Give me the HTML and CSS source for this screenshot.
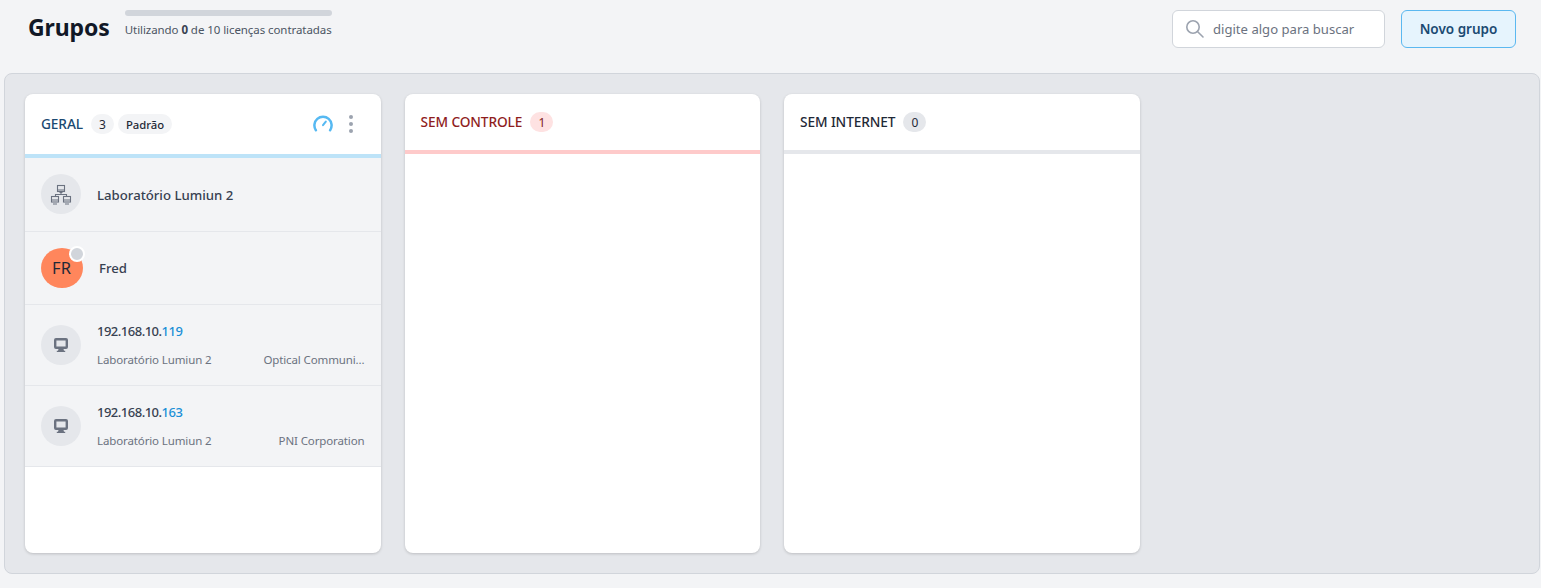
FILE: index.html
```html
<!DOCTYPE html>
<html lang="pt-BR">
<head>
<meta charset="utf-8">
<title>Grupos</title>
<link rel="stylesheet" href="styles.css">
</head>
<body>
<header class="topbar">
  <h1 class="title">Grupos</h1>
  <div class="license">
    <div class="license-track"></div>
    <p class="license-text">Utilizando <b>0</b> de 10 licenças contratadas</p>
  </div>
  <label class="search">
    <svg class="search-icon" viewBox="0 0 20 20" width="20" height="20" fill="none" stroke="currentColor" stroke-width="1.600" stroke-linecap="round"><circle cx="8" cy="8" r="6.200"/><path d="M12.700 12.700 18 18"/></svg>
    <span class="search-text">digite algo para buscar</span>
  </label>
  <button class="new-group">Novo grupo</button>
</header>
<main class="board">
  <section class="column">
    <div class="col-head col-head-tall head-blue">
      <span class="col-name name-blue">GERAL</span>
      <span class="count">3</span>
      <span class="tag">Padrão</span>
      <span class="head-tools">
        <svg class="gauge" viewBox="0 0 20 20" width="20" height="20" fill="none" stroke="currentColor" stroke-width="2.500" stroke-linecap="round"><path d="M2.900 16.200A8.600 8.600 0 1 1 17.100 16.200"/><path d="M10 11.200 12.800 7.600" stroke-width="2"/></svg>
        <span class="dots"><i></i><i></i><i></i></span>
      </span>
    </div>
    <ul class="rows">
      <li class="row row-simple">
        <span class="icon-disc">
          <svg class="net-icon" viewBox="0 0 24 24" width="24" height="24" fill="none" stroke="currentColor" stroke-width="1.100"><rect x="8.500" y="2.500" width="7" height="6"/><path d="M12 8.500v3M6.500 13.500v-2h11v2M10.500 9.500h3"/><rect x="2.500" y="13.500" width="7" height="5.500"/><rect x="14.500" y="13.500" width="7" height="5.500"/><path d="M2.500 17h7M14.500 17h7M4 21h4M16 21h4M8.500 7h7"/></svg>
        </span>
        <span class="row-name">Laboratório Lumiun 2</span>
      </li>
      <li class="row row-simple">
        <span class="avatar">FR<i class="status"></i></span>
        <span class="row-name">Fred</span>
      </li>
      <li class="row row-device">
        <span class="icon-disc">
          <svg viewBox="0 0 20 20" width="20" height="20" fill="currentColor"><path fill-rule="evenodd" d="M5 3h10a2 2 0 0 1 2 2v7a2 2 0 0 1-2 2H5a2 2 0 0 1-2-2V5a2 2 0 0 1 2-2Zm.400 2.400v6.200h9.200V5.400Z"/><path d="M7.500 14h5l.5 1.700h1.200V17H5.800v-1.300H7Z"/></svg>
        </span>
        <div class="device">
          <div class="ip">192.168.10.<span class="ip-end">119</span></div>
          <div class="meta"><span>Laboratório Lumiun 2</span><span class="vendor">Optical Communi...</span></div>
        </div>
      </li>
      <li class="row row-device">
        <span class="icon-disc">
          <svg viewBox="0 0 20 20" width="20" height="20" fill="currentColor"><path fill-rule="evenodd" d="M5 3h10a2 2 0 0 1 2 2v7a2 2 0 0 1-2 2H5a2 2 0 0 1-2-2V5a2 2 0 0 1 2-2Zm.400 2.400v6.200h9.200V5.400Z"/><path d="M7.500 14h5l.5 1.700h1.200V17H5.800v-1.300H7Z"/></svg>
        </span>
        <div class="device">
          <div class="ip">192.168.10.<span class="ip-end">163</span></div>
          <div class="meta"><span>Laboratório Lumiun 2</span><span class="vendor">PNI Corporation</span></div>
        </div>
      </li>
    </ul>
  </section>
  <section class="column">
    <div class="col-head head-red">
      <span class="col-name name-red">SEM CONTROLE</span>
      <span class="count count-red">1</span>
    </div>
  </section>
  <section class="column">
    <div class="col-head head-gray">
      <span class="col-name name-dark">SEM INTERNET</span>
      <span class="count count-gray">0</span>
    </div>
  </section>
</main>
</body>
</html>
```

FILE: styles.css
```css
* { box-sizing: border-box; }
html, body { height: 100%; }
body {
  margin: 0;
  background: #f3f4f6;
  font-family: "Noto Sans", "Open Sans", sans-serif;
  color: #111827;
  overflow: hidden;
}
.topbar {
  height: 73px;
  display: flex;
  align-items: flex-start;
  padding: 10px 25px 0 28px;
}
.title {
  margin: 2px 15px 0 0;
  font-size: 23px;
  line-height: 30px;
  font-weight: 700;
  letter-spacing: -0.1px;
}
.license { width: 207px; }
.license-track {
  height: 6px;
  border-radius: 3px;
  background: #d1d5db;
}
.license-text {
  margin: 5px 0 0;
  font-size: 11.500px;
  line-height: 18px;
  color: #4b5563;
  white-space: nowrap;
  letter-spacing: -0.07px;
}
.license-text b { color: #374151; }
.search {
  margin-left: auto;
  width: 213px;
  height: 38px;
  display: flex;
  align-items: center;
  padding-left: 12px;
  background: #fff;
  border: 1px solid #d1d5db;
  border-radius: 6px;
}
.search-icon { color: #9ca3af; flex: none; }
.search-text {
  margin-left: 8px;
  font-size: 13.100px;
  color: #6b7280;
  white-space: nowrap;
}
.new-group {
  margin-left: 16px;
  width: 115px;
  height: 38px;
  padding: 0;
  background: #e6f4fd;
  border: 1px solid #5bb8f0;
  border-radius: 6px;
  color: #1b4a72;
  font: 600 13.500px "Noto Sans", sans-serif;
}
.board {
  height: 501px;
  margin: 0 1px 0 4px;
  padding: 20px;
  display: flex;
  gap: 24px;
  background: #e5e7eb;
  border: 1px solid #d1d5db;
  border-radius: 8px;
}
.column {
  width: 355.500px;
  flex: none;
  background: #fff;
  border-radius: 8px;
  box-shadow: 0 1px 3px rgba(0, 0, 0, .18);
  overflow: hidden;
}
.col-head {
  height: 60px;
  display: flex;
  align-items: center;
  padding: 0 16px;
  border-bottom: 4px solid;
}
.col-head-tall { height: 64px; }
.head-blue { border-color: #bde3f8; }
.head-red { border-color: #fecaca; }
.head-gray { border-color: #e5e7eb; }
.col-name {
  font-size: 13.700px;
  line-height: 20px;
  font-weight: 500;
  white-space: nowrap;
  letter-spacing: -0.1px;
}
.name-blue { color: #1b4a72; }
.name-red { color: #8f1d1d; }
.name-dark { color: #1f2937; }
.count {
  margin-left: 8px;
  min-width: 23px;
  height: 20px;
  padding: 0 6px;
  display: inline-flex;
  align-items: center;
  justify-content: center;
  border-radius: 10px;
  background: #f3f4f6;
  font-size: 12px;
  font-weight: 400;
  color: #1f2937;
}
.count-red { background: #fee2e2; color: #7f1d1d; }
.count-gray { background: #e5e7eb; }
.tag {
  margin-left: 4px;
  width: 54px;
  height: 20px;
  display: inline-flex;
  align-items: center;
  justify-content: center;
  border-radius: 10px;
  background: #f3f4f6;
  font-size: 11.300px;
  font-weight: 500;
  color: #1f2937;
}
.head-tools {
  margin-left: auto;
  display: flex;
  align-items: center;
  gap: 16px;
  padding-right: 12px;
}
.gauge { color: #56b9f2; }
.dots { display: flex; flex-direction: column; gap: 3px; }
.dots i {
  width: 4px;
  height: 4px;
  border-radius: 50%;
  background: #9ca3af;
}
.rows {
  margin: 0;
  padding: 0;
  list-style: none;
}
.row {
  display: flex;
  align-items: center;
  padding: 0 16px;
  background: #f3f4f6;
  border-bottom: 1px solid #e5e7eb;
}
.row-simple { height: 73.500px; }
.row-device { height: 81px; }
.icon-disc {
  width: 40px;
  height: 40px;
  flex: none;
  display: flex;
  align-items: center;
  justify-content: center;
  border-radius: 50%;
  background: #e5e7eb;
  color: #6b7280;
}
.net-icon { margin-top: 1px; }
.row-name {
  margin-left: 16px;
  padding-top: 1px;
  font-size: 13.200px;
  font-weight: 500;
  color: #374151;
  white-space: nowrap;
}
.avatar {
  position: relative;
  width: 42px;
  height: 40px;
  flex: none;
  display: flex;
  align-items: center;
  justify-content: center;
  padding-right: 1px;
  border-radius: 50%;
  background: #ff865c;
  font-size: 16.500px;
  color: #1f2937;
}
.status {
  position: absolute;
  top: -2px;
  right: -2px;
  width: 16px;
  height: 16px;
  border-radius: 50%;
  background: #d1d5db;
  border: 2px solid #fff;
}
.device { margin-left: 16px; flex: 1; min-width: 0; }
.ip {
  font-size: 13px;
  line-height: 18px;
  font-weight: 500;
  color: #374151;
  letter-spacing: -0.5px;
}
.ip-end { color: #1a8fd6; font-weight: 500; }
.meta {
  margin-top: 12px;
  display: flex;
  justify-content: space-between;
  font-size: 11.500px;
  line-height: 16px;
  color: #6b7280;
  white-space: nowrap;
  letter-spacing: -0.12px;
}
```
